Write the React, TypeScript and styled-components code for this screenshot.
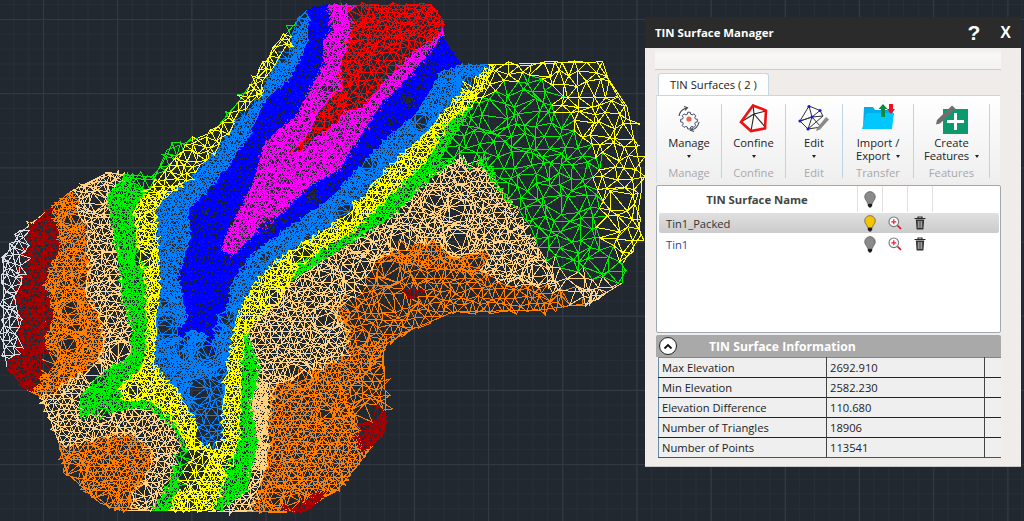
import React from 'react'
import styled, { createGlobalStyle } from 'styled-components'

type Pt = [number, number]
type Band = { color: string; spacing: number; pts: Pt[] }
type Patch = { spacing: number; pts: Pt[] }

const TAN = '#ffd37f'
const ORANGE = '#ff7f00'
const DARKRED = '#a80000'
const YELLOW = '#ffff00'
const GREEN = '#00f000'

const HULL: Pt[] = [
  [307, 10], [327, 5], [430, 5], [443, 20], [442, 37], [460, 65], [480, 65], [597, 62], [627, 107], [640, 167],
  [642, 187], [637, 217], [641, 235], [623, 263], [622, 283], [590, 303], [540, 310], [453, 312], [413, 329],
  [387, 343], [383, 353], [386, 407], [385, 430], [340, 487], [303, 512], [120, 510], [100, 503], [67, 473],
  [59, 443], [42, 397], [27, 390], [7, 367], [3, 343], [3, 260], [20, 233], [70, 192], [107, 173], [127, 175],
  [155, 177], [167, 150], [213, 132], [240, 100], [267, 60], [287, 33],
]

const BANDS: Band[] = [
  { color: '#ff0000', spacing: 5, pts: [[350, 3], [432, 3], [445, 20], [442, 33], [417, 50], [390, 77], [363, 107], [343, 112], [337, 123], [317, 137], [300, 153], [293, 152], [310, 130], [317, 113], [327, 100], [343, 87], [338, 73], [343, 57], [350, 33]] },
  { color: '#ff00ff', spacing: 4, pts: [[327, 3], [353, 3], [445, 30], [437, 43], [410, 77], [383, 103], [363, 133], [340, 170], [310, 187], [283, 213], [260, 230], [233, 257], [220, 250], [227, 230], [240, 207], [253, 180], [263, 143], [297, 113], [313, 80], [323, 63], [322, 40], [330, 30]] },
  { color: '#0000ff', spacing: 2.8, pts: [[308, 8], [327, 3], [445, 3], [445, 37], [462, 65], [440, 73], [417, 113], [393, 133], [363, 163], [333, 197], [290, 227], [263, 247], [250, 257], [233, 283], [227, 310], [217, 327], [212, 350], [203, 333], [190, 330], [182, 345], [177, 330], [187, 317], [177, 277], [190, 237], [187, 210], [207, 190], [227, 167], [250, 133], [263, 103], [290, 77], [307, 43]] },
  { color: '#0080ff', spacing: 3.6, pts: [[305, 5], [445, 3], [462, 60], [490, 66], [475, 80], [443, 113], [430, 130], [403, 153], [363, 197], [330, 227], [287, 253], [270, 267], [253, 287], [237, 320], [227, 367], [223, 410], [223, 433], [217, 450], [197, 443], [197, 427], [177, 390], [167, 383], [153, 363], [157, 310], [160, 287], [157, 237], [155, 207], [187, 180], [217, 147], [237, 117], [260, 97], [270, 70], [290, 47], [293, 33]] },
  { color: YELLOW, spacing: 4.4, pts: [[480, 60], [600, 58], [630, 107], [645, 167], [645, 187], [640, 217], [645, 235], [623, 263], [607, 237], [607, 217], [593, 177], [607, 163], [580, 137], [573, 123], [558, 107], [558, 93], [540, 73], [500, 83], [470, 107], [447, 123], [427, 160], [383, 203], [350, 233], [300, 263], [287, 287], [257, 320], [243, 337], [240, 410], [238, 440], [227, 470], [213, 514], [170, 514], [190, 457], [177, 423], [150, 400], [123, 400], [120, 387], [140, 370], [147, 350], [147, 320], [147, 287], [139, 250], [133, 210], [147, 193], [168, 165], [193, 140], [227, 123], [250, 87], [265, 60], [277, 40], [290, 33], [307, 3], [445, 3]] },
  { color: GREEN, spacing: 3.8, pts: [[167, 148], [153, 175], [127, 173], [107, 197], [115, 237], [120, 270], [123, 303], [133, 330], [130, 357], [107, 370], [80, 397], [80, 417], [120, 410], [150, 407], [173, 427], [183, 447], [170, 480], [153, 510], [150, 515], [213, 515], [247, 490], [257, 443], [250, 403], [260, 370], [247, 335], [273, 297], [283, 287], [307, 270], [350, 243], [387, 220], [430, 178], [457, 157], [480, 163], [490, 177], [507, 200], [527, 223], [550, 260], [587, 273], [622, 285], [645, 250], [645, 50], [300, 0], [200, 100]] },
  { color: '#d8dce0', spacing: 8, pts: [[0, 230], [30, 227], [27, 237], [23, 267], [15, 300], [20, 317], [18, 350], [12, 360], [0, 372]] },
  { color: DARKRED, spacing: 4.4, pts: [[30, 227], [50, 208], [57, 233], [57, 250], [42, 283], [53, 313], [43, 337], [48, 357], [35, 387], [25, 392], [5, 367], [12, 360], [18, 350], [20, 317], [15, 300], [23, 267], [27, 237]] },
  { color: DARKRED, spacing: 3.6, pts: [[377, 408], [390, 415], [390, 432], [363, 452], [358, 440], [363, 423]] },
  { color: DARKRED, spacing: 3.6, pts: [[280, 508], [303, 514], [325, 495], [318, 492], [300, 505]] },
  { color: DARKRED, spacing: 2.8, pts: [[402, 291], [412, 288], [423, 290], [418, 296], [406, 297]] },
  { color: ORANGE, spacing: 4.4, pts: [[70, 190], [80, 200], [78, 213], [90, 230], [87, 247], [90, 270], [87, 293], [100, 317], [105, 343], [100, 360], [83, 373], [57, 390], [35, 402], [25, 392], [35, 387], [50, 205]] },
  { color: ORANGE, spacing: 5, pts: [[57, 443], [80, 445], [100, 437], [133, 433], [153, 453], [150, 470], [140, 487], [133, 507], [120, 512], [100, 505], [65, 475]] },
  { color: ORANGE, spacing: 5, pts: [[405, 242], [433, 240], [453, 257], [483, 250], [493, 257], [480, 270], [503, 282], [533, 285], [570, 293], [595, 305], [540, 320], [400, 400], [400, 450], [310, 520], [247, 515], [257, 493], [267, 463], [268, 423], [272, 387], [283, 383], [320, 367], [347, 353], [347, 327], [332, 312], [350, 300], [363, 280], [380, 257]] },
  { color: TAN, spacing: 6, pts: HULL },
]

// places where the triangles are clearly larger or smaller than the rest of their band
const PATCHES: Patch[] = [
  { spacing: 12, pts: [[500, 60], [650, 50], [650, 290], [560, 290], [520, 220], [485, 160], [440, 160], [470, 110]] },
  { spacing: 8, pts: [[165, 140], [300, 0], [310, 10], [250, 110], [190, 180], [150, 195], [130, 180]] },
  { spacing: 8, pts: [[190, 375], [222, 375], [222, 448], [195, 445]] },
  { spacing: 8, pts: [[172, 450], [212, 450], [200, 490], [180, 490]] },
  { spacing: 2.8, pts: [[252, 383], [267, 383], [267, 470], [252, 470]] },
  { spacing: 8, pts: [[340, 255], [590, 290], [590, 320], [420, 330], [350, 350]] },
  { spacing: 7, pts: [[315, 137], [345, 100], [365, 60], [440, 20], [420, 50], [370, 110], [320, 135]] },
  { spacing: 8, pts: [[345, 395], [390, 345], [390, 405], [360, 440]] },
]

const rng = (seed: number) => () => {
  seed = (seed + 0x6d2b79f5) | 0
  let t = Math.imul(seed ^ (seed >>> 15), 1 | seed)
  t = (t + Math.imul(t ^ (t >>> 7), 61 | t)) ^ t
  return ((t ^ (t >>> 14)) >>> 0) / 4294967296
}

const inside = (x: number, y: number, pts: Pt[]) => {
  let hit = false
  for (let i = 0, j = pts.length - 1; i < pts.length; j = i++) {
    const [xi, yi] = pts[i]
    const [xj, yj] = pts[j]
    if (yi > y !== yj > y && x < ((xj - xi) * (y - yi)) / (yj - yi) + xi) hit = !hit
  }
  return hit
}

const bandAt = (x: number, y: number) => BANDS.find((b) => inside(x, y, b.pts))

// spots where the points are pushed outward, which leaves the long spokes seen in the real mesh
const PINCHES = (() => {
  const rand = rng(1234)
  return Array.from({ length: 150 }, () => ({ x: rand() * 640, y: rand() * 515, r: 7 + rand() * 13 }))
})()

const pinch = (p: Pt): Pt => {
  for (const c of PINCHES) {
    const dx = p[0] - c.x
    const dy = p[1] - c.y
    const d = Math.hypot(dx, dy)
    if (d < c.r && d > 0) {
      const k = Math.pow(d / c.r, 0.45) * (c.r / d)
      return [c.x + dx * k, c.y + dy * k]
    }
  }
  return p
}

const buildMesh = () => {
  const paths: Record<string, string[]> = {}
  const tiers = Array.from(new Set([...BANDS.map((b) => b.spacing), ...PATCHES.map((p) => p.spacing)]))
  tiers.forEach((s, tierIndex) => {
    const rand = rng(77 + tierIndex)
    const rowH = s * 0.866
    const cols = Math.ceil(650 / s) + 2
    const rows = Math.ceil(525 / rowH) + 2
    const grid: Pt[][] = []
    for (let j = 0; j < rows; j++) {
      const row: Pt[] = []
      for (let i = 0; i < cols; i++) {
        row.push(
          pinch([
            i * s + (j % 2 ? s / 2 : 0) + (rand() - 0.5) * s * 0.75,
            j * rowH + (rand() - 0.5) * s * 0.75,
          ]),
        )
      }
      grid.push(row)
    }
    const addTri = (a: Pt, b: Pt, c: Pt) => {
      const cx = (a[0] + b[0] + c[0]) / 3
      const cy = (a[1] + b[1] + c[1]) / 3
      if (!inside(cx, cy, HULL)) return
      const band = bandAt(cx, cy)
      if (!band) return
      const patch = PATCHES.find((p) => inside(cx, cy, p.pts))
      const want = band.color === '#0000ff' || band.color === '#ff00ff' ? band.spacing : patch ? patch.spacing : band.spacing
      if (want !== s) return
      const list = paths[band.color] || (paths[band.color] = [])
      list.push(`M${a[0].toFixed(1)} ${a[1].toFixed(1)}L${b[0].toFixed(1)} ${b[1].toFixed(1)}L${c[0].toFixed(1)} ${c[1].toFixed(1)}Z`)
    }
    for (let j = 0; j < rows - 1; j++) {
      for (let i = 0; i < cols - 1; i++) {
        const p = grid[j][i]
        const q = grid[j][i + 1]
        const r = grid[j + 1][i]
        const t = grid[j + 1][i + 1]
        if (j % 2) {
          addTri(p, q, t)
          addTri(p, t, r)
        } else {
          addTri(p, q, r)
          addTri(q, t, r)
        }
      }
    }
  })
  // the outer edge of the surface, coloured by the band it runs through
  HULL.forEach((a, i) => {
    const b = HULL[(i + 1) % HULL.length]
    const steps = Math.max(1, Math.round(Math.hypot(b[0] - a[0], b[1] - a[1]) / 8))
    for (let k = 0; k < steps; k++) {
      const x0 = a[0] + ((b[0] - a[0]) * k) / steps
      const y0 = a[1] + ((b[1] - a[1]) * k) / steps
      const x1 = a[0] + ((b[0] - a[0]) * (k + 1)) / steps
      const y1 = a[1] + ((b[1] - a[1]) * (k + 1)) / steps
      const cx = (x0 + x1) / 2
      const cy = (y0 + y1) / 2
      const band = bandAt(cx, cy) || BANDS[BANDS.length - 1]
      const list = paths[band.color] || (paths[band.color] = [])
      list.push(`M${x0.toFixed(1)} ${y0.toFixed(1)}L${x1.toFixed(1)} ${y1.toFixed(1)}`)
    }
  })
  return Object.entries(paths).map(([color, list]) => ({ color, d: list.join('') }))
}

const MESH = buildMesh()

const GlobalStyle = createGlobalStyle`
  html, body {
    margin: 0;
    padding: 0;
    background: #212830;
  }
`

const Page = styled.div`
  width: 1024px;
  height: 521px;
  display: flex;
  overflow: hidden;
  font-family: 'Open Sans', 'Noto Sans', sans-serif;
  background-color: #212830;
  background-image:
    linear-gradient(to right, #343b47 1px, transparent 1px),
    linear-gradient(to bottom, #343b47 1px, transparent 1px),
    linear-gradient(to right, #272e38 1px, transparent 1px),
    linear-gradient(to bottom, #272e38 1px, transparent 1px);
  background-size: 74.2px 74.2px, 74.2px 74.2px, 14.84px 14.84px, 14.84px 14.84px;
  background-position: 43px 19px, 43px 19px, 43px 19px, 43px 19px;
`

const MapCanvas = styled.svg`
  display: block;
  flex: 0 0 645px;
  width: 645px;
  height: 521px;
`

const Panel = styled.div`
  flex: 0 0 376px;
  height: 449px;
  margin-top: 17px;
  background: #efecea;
  display: flex;
  flex-direction: column;
  box-shadow: 0 1px 0 #c9c9c9;
`

const TitleBar = styled.div`
  height: 31px;
  flex: none;
  background: #2b2b2b;
  display: flex;
  align-items: center;
  padding: 0 10px;
  color: #fff;
`

const Title = styled.span`
  font-size: 11.4px;
  font-weight: 700;
  flex: 1;
`

const TitleButton = styled.span<{ $size: number; $gap: number }>`
  font-family: 'Liberation Sans', sans-serif;
  font-weight: 700;
  font-size: ${(p) => p.$size}px;
  margin-right: ${(p) => p.$gap}px;
`

const TopStrip = styled.div`
  flex: none;
  height: 21px;
  margin: 0 20px 0 10px;
  background: linear-gradient(to bottom, #efecea, #f8f8f7 35%, #f3f2f1);
  border-bottom: 1px solid #bcd0e0;
`

const TabRow = styled.div`
  flex: none;
  height: 22px;
  margin: 3px 0 0 13px;
  display: flex;
`

const Tab = styled.div`
  width: 109px;
  background: #fff;
  border: 1px solid #c5d6e5;
  border-bottom: 0;
  border-radius: 3px 3px 0 0;
  font-size: 11.2px;
  color: #222;
  display: flex;
  align-items: center;
  justify-content: center;
`

const Ribbon = styled.div`
  flex: none;
  height: 88px;
  margin: 0 21px 0 11px;
  padding-top: 8px;
  box-sizing: border-box;
  border-top: 1px solid #c5d6e5;
  border-left: 1px solid #d5dfe8;
  background: linear-gradient(to bottom, #ffffff, #f6f5f5 60%, #f0efef);
  display: flex;
`

const RibbonGroup = styled.div<{ $width: number }>`
  flex: 0 0 ${(p) => p.$width}px;
  height: 74px;
  box-sizing: border-box;
  border-right: 1px solid #c3d2df;
  display: flex;
  flex-direction: column;
  align-items: center;
`

const IconSlot = styled.div`
  flex: none;
  height: 30px;
  display: flex;
  align-items: center;
  justify-content: center;
`

const ButtonLabel = styled.div`
  flex: none;
  height: 30px;
  margin-top: 2px;
  font-size: 11.2px;
  line-height: 13px;
  color: #222;
  text-align: center;
  white-space: nowrap;
`

const Caret = styled.span`
  display: inline-block;
  width: 0;
  height: 0;
  margin-left: 3px;
  vertical-align: 2px;
  border-left: 2.5px solid transparent;
  border-right: 2.5px solid transparent;
  border-top: 3px solid #222;
`

const CaretRow = styled.div`
  height: 13px;
  line-height: 13px;
  margin-left: -3px;
`

const GroupName = styled.div`
  flex: none;
  font-size: 11.2px;
  line-height: 14px;
  color: #a8a8a8;
`

const ListBox = styled.div`
  flex: none;
  height: 148px;
  margin: 2px 20px 0 11px;
  box-sizing: border-box;
  background: #fff;
  border: 1px solid #9fa9b3;
  border-radius: 2px;
`

const ListHeader = styled.div`
  height: 26px;
  display: grid;
  grid-template-columns: 201px 25px 25px 25px 1fr;
`

const HeaderCell = styled.div<{ $bold?: boolean }>`
  display: flex;
  align-items: center;
  justify-content: center;
  border-right: 1px solid #e0e0e0;
  font-size: 11.3px;
  font-weight: ${(p) => (p.$bold ? 700 : 400)};
  color: #444;
  &:last-child {
    border-right: 0;
  }
`

const ListRow = styled.div<{ $selected?: boolean }>`
  height: 20px;
  margin: ${(p) => (p.$selected ? '1px 1px 1px 2px' : '0 1px 0 2px')};
  display: grid;
  grid-template-columns: 198px 25px 25px 25px 1fr;
  align-items: center;
  border-radius: 2px;
  background: ${(p) => (p.$selected ? 'linear-gradient(to bottom, #e0e0e0, #cbcbcb)' : 'transparent')};
`

const RowName = styled.span<{ $selected?: boolean }>`
  padding-left: 7px;
  font-size: 11.2px;
  color: ${(p) => (p.$selected ? '#333' : '#2c4a9a')};
`

const RowIcon = styled.span`
  display: flex;
  justify-content: center;
`

const InfoHeader = styled.div`
  flex: none;
  height: 22px;
  margin: 2px 20px 0 11px;
  background: #a9a9a9;
  border-radius: 2px 2px 0 0;
  display: flex;
  align-items: center;
  color: #fff;
  font-size: 12.2px;
  font-weight: 700;
`

const Collapse = styled.span`
  width: 18px;
  height: 18px;
  margin: 0 32px 0 3px;
  box-sizing: border-box;
  border-radius: 50%;
  border: 1px solid #222;
  background: #fff;
  display: flex;
  align-items: center;
  justify-content: center;
`

const InfoTable = styled.table`
  flex: none;
  width: 343px;
  margin: 0 20px 0 13px;
  border-collapse: collapse;
  table-layout: fixed;
  background: #efefef;
  border-top: 1px solid #6a8cab;
  border-bottom: 1px solid #2f5b85;
  border-left: 1px solid #6a8cab;
  font-size: 11.2px;
  color: #222;
`

const InfoRow = styled.tr`
  height: 20px;
  border-bottom: 1px solid #222;
  &:last-child {
    border-bottom: 0;
  }
`

const InfoCell = styled.td`
  padding: 0 0 0 3px;
  line-height: 14px;
  border-right: 1px solid #444;
  overflow: hidden;
  white-space: nowrap;
  &:last-child {
    border-right: 0;
  }
`

const ManageIcon = () => (
  <svg width="30" height="30" viewBox="0 0 30 30" fill="none">
    <path d="M5 12a10 10 0 0 1 8-8" stroke="#3c4650" strokeWidth="1.1" />
    <path d="M10 2.500l3.500 1.300-2.500 2.600" stroke="#3c4650" strokeWidth="1.1" />
    <path d="M25 18a10 10 0 0 1-8 8" stroke="#3c4650" strokeWidth="1.1" />
    <path d="M20 27.500l-3.500-1.300 2.500-2.600" stroke="#3c4650" strokeWidth="1.1" />
    <path
      d="M13.600 7.500h2.800l.5 2.200 1.600.7 2-1.100 2 2-1.100 2 .7 1.600 2.200.5v2.800l-2.200.5-.7 1.600 1.100 2-2 2-2-1.100-1.600.7-.5 2.200h-2.800l-.5-2.200-1.600-.7-2 1.100-2-2 1.100-2-.7-1.600-2.200-.5v-2.800l2.200-.5.7-1.600-1.100-2 2-2 2 1.100 1.600-.7z"
      transform="translate(1.500 1.500) scale(0.9)"
      stroke="#3c4a5c"
      strokeWidth="1.1"
      fill="#f8fafc"
    />
    <circle cx="15" cy="15" r="2.600" fill="#f0624a" />
  </svg>
)

const ConfineIcon = () => (
  <svg width="30" height="30" viewBox="0 0 30 30" fill="none">
    <path d="M15 10L14 1.500M15 10L27 7M15 10L27 24M15 10L12 27M15 10L2 18" stroke="#222" strokeWidth="1.1" />
    <path d="M14 1.500L27 6.500L26 24.500L12 27L2 18Z" stroke="#ee1111" strokeWidth="2.600" strokeLinejoin="miter" />
  </svg>
)

const EditIcon = () => (
  <svg width="34" height="30" viewBox="0 0 34 30" fill="none">
    <path d="M12 2L23 6.500L15 13L3 17L11 25L26 12M12 2L15 13L11 25M12 2L3 17M23 6.500L26 12L15 13M3 17L15 13L24 23L11 25" stroke="#333" strokeWidth="1" />
    <path d="M20 24l9-11 3 2.500-9 10-4 1.500z" fill="#8a8a8a" />
    <g fill="#1a1ad0">
      <circle cx="12" cy="2.500" r="1.600" />
      <circle cx="23" cy="6.500" r="1.600" />
      <circle cx="15" cy="13" r="1.600" />
      <circle cx="3" cy="17" r="1.600" />
      <circle cx="11" cy="25" r="1.600" />
    </g>
  </svg>
)

const ImportIcon = () => (
  <svg width="34" height="30" viewBox="0 0 34 30">
    <path d="M3 3h9l2 3h18v4H6L2 23z" fill="#00aee8" />
    <path d="M6 9h27l-2 16H1z" fill="#00c8ff" />
    <path d="M22 0l4.500 5H24v8h-4V5h-2.500z" fill="#0c8a3a" />
    <path d="M30 10l-4-5h2V0h4v5h2z" fill="#f01020" />
  </svg>
)

const CreateIcon = () => (
  <svg width="34" height="32" viewBox="0 0 34 32">
    <rect x="8" y="6" width="25" height="25" fill="#0c9a6c" />
    <path d="M19 10h3v7h7v3h-7v7h-3v-7h-7v-3h7z" fill="#fff" />
    <path d="M2 17L17 2.500l3.500 3.300L5 20.500l-4 1z" fill="#6e6e6e" />
  </svg>
)

const Bulb = ({ color }: { color: string }) => (
  <svg width="12" height="17" viewBox="0 0 12 17">
    <path d="M6 .6a5.300 5.300 0 0 0-5.300 5.300c0 2.600 2.400 4 3 6.600h4.600c.6-2.600 3-4 3-6.600A5.300 5.300 0 0 0 6 .6z" fill={color} stroke="#555" strokeWidth=".7" />
    <path d="M3.800 13h4.400v1.600l-1.200 1.800H5L3.800 14.600z" fill="#1c1c1c" />
  </svg>
)

const ZoomIcon = () => (
  <svg width="14" height="14" viewBox="0 0 14 14" fill="none">
    <circle cx="5.800" cy="5.800" r="4.800" stroke="#777" strokeWidth="1.1" fill="#fff" />
    <path d="M5.800 3.300v5M3.300 5.800h5" stroke="#ee2030" strokeWidth="1.2" />
    <path d="M9.500 9.500l3.500 3.500" stroke="#e01020" strokeWidth="1.7" />
  </svg>
)

const TrashIcon = () => (
  <svg width="12" height="14" viewBox="0 0 12 14" fill="none">
    <path d="M.5 2.500h11M4 2.500V1h4v1.500" stroke="#2a2a2a" strokeWidth="1.2" />
    <path d="M1.800 3.500h8.400l-.8 10H2.600z" fill="#333" />
    <path d="M4.300 5v7M6 5v7M7.700 5v7" stroke="#eee" strokeWidth=".7" />
  </svg>
)

type RibbonEntry = { width: number; icon: React.ReactNode; label: React.ReactNode; group: string }

const RIBBON: RibbonEntry[] = [
  { width: 65, icon: <ManageIcon />, label: <>Manage<CaretRow><Caret /></CaretRow></>, group: 'Manage' },
  { width: 64, icon: <ConfineIcon />, label: <>Confine<CaretRow><Caret /></CaretRow></>, group: 'Confine' },
  { width: 57, icon: <EditIcon />, label: <>Edit<CaretRow><Caret /></CaretRow></>, group: 'Edit' },
  { width: 71, icon: <ImportIcon />, label: <>Import /<br />Export <Caret /></>, group: 'Transfer' },
  { width: 76, icon: <CreateIcon />, label: <>Create<br />Features <Caret /></>, group: 'Features' },
]

const SURFACES = [
  { name: 'Tin1_Packed', selected: true },
  { name: 'Tin1', selected: false },
]

const INFO = [
  ['Max Elevation', '2692.910'],
  ['Min Elevation', '2582.230'],
  ['Elevation Difference', '110.680'],
  ['Number of Triangles', '18906'],
  ['Number of Points', '113541'],
]

export default function App() {
  return (
    <Page>
      <GlobalStyle />
      <MapCanvas viewBox="0 0 645 521" fill="none">
        {MESH.map((m) => (
          <path key={m.color} d={m.d} stroke={m.color} strokeWidth={1} shapeRendering="crispEdges" />
        ))}
      </MapCanvas>
      <Panel>
        <TitleBar>
          <Title>TIN Surface Manager</Title>
          <TitleButton $size={21} $gap={20}>?</TitleButton>
          <TitleButton $size={16} $gap={0}>X</TitleButton>
        </TitleBar>
        <TopStrip />
        <TabRow>
          <Tab>TIN Surfaces ( 2 )</Tab>
        </TabRow>
        <Ribbon>
          {RIBBON.map((r) => (
            <RibbonGroup key={r.group} $width={r.width}>
              <IconSlot>{r.icon}</IconSlot>
              <ButtonLabel>{r.label}</ButtonLabel>
              <GroupName>{r.group}</GroupName>
            </RibbonGroup>
          ))}
        </Ribbon>
        <ListBox>
          <ListHeader>
            <HeaderCell $bold>TIN Surface Name</HeaderCell>
            <HeaderCell>
              <Bulb color="#8a8a8a" />
            </HeaderCell>
            <HeaderCell />
            <HeaderCell />
            <HeaderCell />
          </ListHeader>
          {SURFACES.map((s) => (
            <ListRow key={s.name} $selected={s.selected}>
              <RowName $selected={s.selected}>{s.name}</RowName>
              <RowIcon>
                <Bulb color={s.selected ? '#f5c400' : '#8a8a8a'} />
              </RowIcon>
              <RowIcon>
                <ZoomIcon />
              </RowIcon>
              <RowIcon>
                <TrashIcon />
              </RowIcon>
            </ListRow>
          ))}
        </ListBox>
        <InfoHeader>
          <Collapse>
            <svg width="10" height="7" viewBox="0 0 10 7" fill="none">
              <path d="M1.500 5.500L5 2l3.500 3.500" stroke="#111" strokeWidth="1.800" />
            </svg>
          </Collapse>
          TIN Surface Information
        </InfoHeader>
        <InfoTable>
          <colgroup>
            <col width="168" />
            <col width="158" />
            <col />
          </colgroup>
          <tbody>
            {INFO.map(([label, value]) => (
              <InfoRow key={label}>
                <InfoCell>{label}</InfoCell>
                <InfoCell>{value}</InfoCell>
                <InfoCell />
              </InfoRow>
            ))}
          </tbody>
        </InfoTable>
      </Panel>
    </Page>
  )
}
